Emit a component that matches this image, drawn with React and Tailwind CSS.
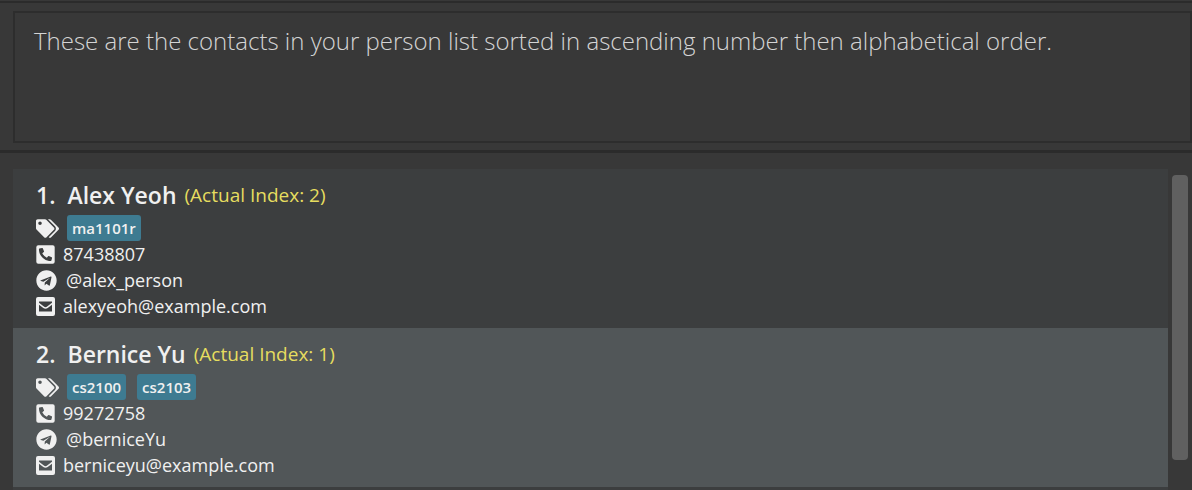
import { FaTags, FaPhoneSquareAlt, FaTelegram } from "react-icons/fa";

const contacts = [
  {
    position: 1,
    name: "Alex Yeoh",
    actualIndex: 2,
    tags: ["ma1101r"],
    phone: "87438807",
    handle: "@alex_person",
    email: "alexyeoh@example.com",
  },
  {
    position: 2,
    name: "Bernice Yu",
    actualIndex: 1,
    tags: ["cs2100", "cs2103"],
    phone: "99272758",
    handle: "@berniceYu",
    email: "berniceyu@example.com",
  },
];

function EnvelopeSquare() {
  return (
    <svg viewBox="0 0 19 19" className="size-[19px]" fill="currentColor" aria-hidden="true">
      <path
        fillRule="evenodd"
        d="M2 0H17a2 2 0 0 1 2 2V17a2 2 0 0 1-2 2H2a2 2 0 0 1-2-2V2a2 2 0 0 1 2-2zM3 4.500V5.700L8.200 9.700q1.300.9 2.600 0L16 5.700V4.500zM3 7.800V14.500H16V7.800L11.700 11.100q-2.200 1.500-4.400 0z"
      />
    </svg>
  );
}

function DetailRow({ icon, gap, children }) {
  return (
    <div className={`flex h-[26px] items-center text-lg leading-6 ${gap}`}>
      {icon}
      <span>{children}</span>
    </div>
  );
}

function ContactCard({ contact }) {
  return (
    <li className="bg-[#3c3e3f] pt-[7px] pr-4 pb-[9px] pl-[23px] text-[#f0f0f0] even:bg-[#515658]">
      <div className="mb-px flex h-[38px] items-center whitespace-pre">
        <h2 className="flex gap-3 text-[23px] leading-8 font-semibold">
          <span>{contact.position}.</span>
          <span>{contact.name}</span>
        </h2>
        <span className="ml-2 text-[19px] leading-6 text-[#e6dd5f]">
          (Actual Index: {contact.actualIndex})
        </span>
      </div>
      <div className="flex h-[26px] items-center gap-2">
        <FaTags className="h-[21px] w-[23px]" />
        <ul className="flex gap-[11px]">
          {contact.tags.map((tag) => (
            <li
              key={tag}
              className="flex h-[26px] items-center rounded-[3px] bg-[#3e7b91] px-[5px] text-[15px] leading-6 font-semibold"
            >
              {tag}
            </li>
          ))}
        </ul>
      </div>
      <DetailRow gap="gap-2" icon={<FaPhoneSquareAlt className="h-[21px] w-[19px]" />}>
        {contact.phone}
      </DetailRow>
      <DetailRow gap="gap-[9px]" icon={<FaTelegram className="size-[21px]" />}>
        {contact.handle}
      </DetailRow>
      <DetailRow gap="gap-2" icon={<EnvelopeSquare />}>
        {contact.email}
      </DetailRow>
    </li>
  );
}

export default function App() {
  return (
    <main className="flex min-h-screen flex-col bg-[#383838] pt-px font-['Open_Sans','Segoe_UI',sans-serif]">
      <div className="border-t-2 border-b-3 border-[#2b2b2b] pt-2 pb-[7px] pl-[13px]">
        <textarea
          readOnly
          aria-label="Result"
          className="block h-[132px] w-full resize-none border-2 border-[#2d2d2d] bg-transparent px-[19px] py-[10px] text-2xl leading-9 font-light text-[#d4d4d4] outline-none"
          defaultValue="These are the contacts in your person list sorted in ascending number then alphabetical order."
        />
      </div>
      <div className="flex grow pt-4 pl-[13px]">
        <ol className="grow bg-[#3c3e3f]">
          {contacts.map((contact) => (
            <ContactCard key={contact.position} contact={contact} />
          ))}
        </ol>
        <div className="flex w-6 flex-col pt-[6px] pr-1 pl-1">
          <div className="h-[285px] rounded-[4px] bg-[#606060]" />
        </div>
      </div>
    </main>
  );
}
